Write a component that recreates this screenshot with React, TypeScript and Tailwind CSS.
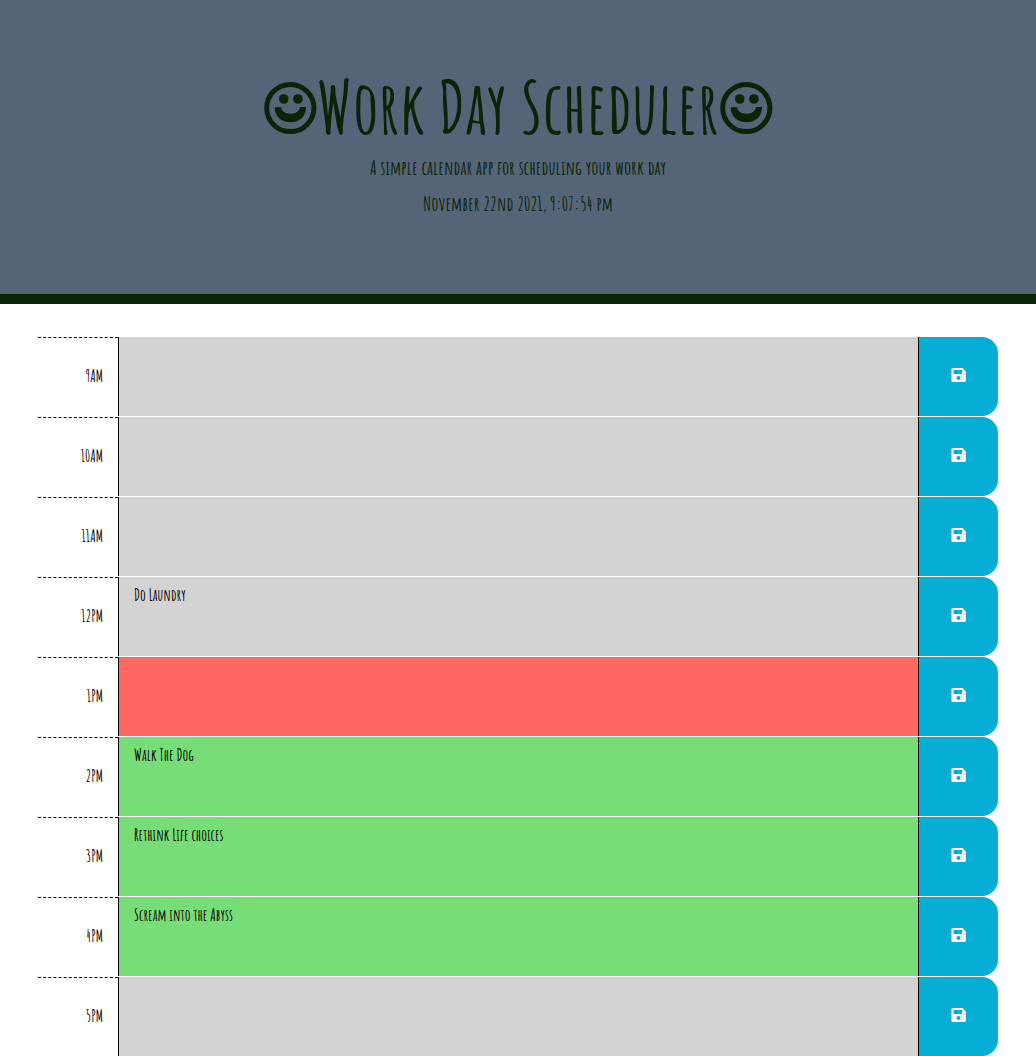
import { useState } from "react";

type Block = { hour: string; text: string; tone: string };

const past = "bg-[#d3d3d3]";
const present = "bg-[#ff6961]";
const future = "bg-[#77dd77]";

const blocks: Block[] = [
  { hour: "9AM", text: "", tone: past },
  { hour: "10AM", text: "", tone: past },
  { hour: "11AM", text: "", tone: past },
  { hour: "12PM", text: "Do Laundry", tone: past },
  { hour: "1PM", text: "", tone: present },
  { hour: "2PM", text: "Walk The Dog", tone: future },
  { hour: "3PM", text: "Rethink Life choices", tone: future },
  { hour: "4PM", text: "Scream into the Abyss", tone: future },
  { hour: "5PM", text: "", tone: past },
];

function Smiley() {
  return (
    <svg viewBox="0 0 54 56" className="h-14 w-[54px] shrink-0" fill="currentColor" aria-hidden="true">
      <circle cx="27.3" cy="29" r="23.600" fill="none" stroke="currentColor" strokeWidth="5" />
      <circle cx="20.800" cy="20" r="4.800" />
      <circle cx="34.900" cy="20" r="4.800" />
      <path d="M11.700 28.300h6.300c.6 4 4.200 6.400 9.500 6.400s8.900-2.400 9.500-6.800h6.100c0 9.400-6.600 15.400-15.600 15.400s-15.800-6-15.800-15z" />
    </svg>
  );
}

function SaveIcon() {
  return (
    <svg viewBox="0 0 15 14" className="h-[14px] w-[15px]" aria-hidden="true">
      <path
        fill="currentColor"
        fillRule="evenodd"
        d="M2 0h9.500L14.800 3.300V12.500a1.500 1.500 0 0 1-1.500 1.500H2A1.600 1.600 0 0 1 .4 12.400V1.600A1.600 1.600 0 0 1 2 0zM2.500 2v4h8.500v-4zM7.500 8a2 2 0 1 0 0 4 2 2 0 0 0 0-4z"
      />
    </svg>
  );
}

function TimeBlock({ block }: { block: Block }) {
  const [text, setText] = useState(block.text);
  const id = `task-${block.hour}`;
  return (
    <div className="grid h-20 grid-cols-12">
      <label
        htmlFor={id}
        className="flex items-center justify-end border-t border-dashed border-black pr-[15px] pb-1 text-base font-bold"
      >
        {block.hour}
      </label>
      <textarea
        id={id}
        value={text}
        onChange={(e) => setText(e.target.value)}
        className={`col-span-10 mb-px block resize-none border-l border-black px-[15px] py-1.5 text-base font-bold outline-none ${block.tone}`}
      />
      <button
        type="button"
        aria-label={`Save ${block.hour}`}
        className="mb-px flex items-center justify-center rounded-r-2xl border-l border-black bg-[#06aed5] pb-[3px] text-white"
      >
        <SaveIcon />
      </button>
    </div>
  );
}

export default function App() {
  return (
    <div className="bg-white font-['Amatic_SC','Liberation_Sans_Narrow','Liberation_Sans',sans-serif] text-black antialiased">
      <header className="border-b-10 border-[#0a2408] bg-[#556577] px-6 pt-[72px] pb-[74px] text-center text-[#0a2408]">
        <h1 className="flex items-center justify-center text-7xl leading-[70px] font-bold">
          <Smiley />
          Work Day Scheduler
          <Smiley />
        </h1>
        <p className="mt-[10px] text-xl leading-8 font-bold">
          A simple calendar app for scheduling your work day
        </p>
        <p className="mt-1 text-xl leading-8 font-bold">
          November 22nd 2021, 9:07:54 pm
        </p>
      </header>
      <main className="px-[38px] pt-[33px]">
        {blocks.map((block) => (
          <TimeBlock key={block.hour} block={block} />
        ))}
      </main>
    </div>
  );
}
